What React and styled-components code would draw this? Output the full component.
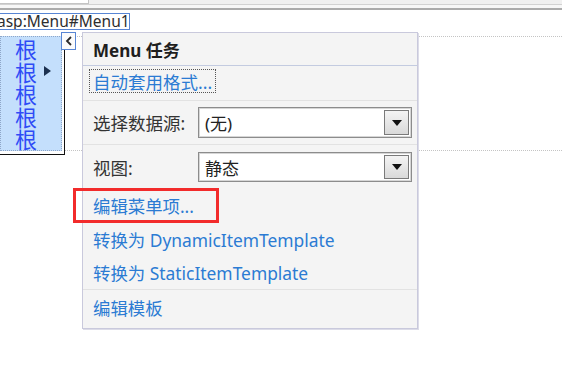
import React from 'react';
import styled, { createGlobalStyle } from 'styled-components';

const GlobalStyle = createGlobalStyle`
  html, body {
    margin: 0;
    background: #fff;
  }
  body {
    font-family: "Noto Sans", "Noto Sans CJK SC", sans-serif;
    width: 562px;
    height: 374px;
    overflow: hidden;
  }
`;

const TopBar = styled.div`
  height: 8px;
  background: #f7f7f7;
  border-bottom: 2px solid #ababab;
`;

const TopStrip = styled.div`
  height: 4px;
  background: #f0f0f0;
  border-bottom: 1px solid #d2d2d2;
  display: flex;
`;

const TopTab = styled.div`
  width: 88px;
  height: 3px;
  background: #fff;
  border-right: 1px solid #c4c4c4;
  border-bottom: 1px solid #c4c4c4;
`;

const Canvas = styled.div`
  position: relative;
  height: 364px;
`;

const Tag = styled.div`
  display: inline-flex;
  align-items: center;
  margin-left: -5px;
  width: 132px;
  height: 15px;
  padding-left: 1px;
  border: 1.5px solid #5785d4;
  font-size: 15.5px;
  color: #2e2e2e;
  line-height: 1;
  white-space: nowrap;
  overflow: hidden;
`;

const DesignBand = styled.div`
  display: flex;
`;

const ControlFrame = styled.div`
  padding-top: 4px;
  padding-right: 2px;
  padding-bottom: 3px;
  border-right: 1.5px solid #111;
  border-bottom: 1.5px solid #111;
`;

const MenuBox = styled.div`
  width: 47px;
  height: 114px;
  padding-left: 15px;
  padding-top: 1px;
  background: #c4dffc;
  outline: 1px dotted #8ea6c8;
  outline-offset: -1px;
  display: flex;
  flex-direction: column;
`;

const MenuItem = styled.div`
  display: flex;
  align-items: center;
  height: 22.6px;
  font-family: "Noto Sans CJK SC", sans-serif;
  font-size: 22px;
  line-height: 22.6px;
  color: #2f4cf6;
`;

const PopArrow = styled.span`
  margin-left: 7px;
  width: 0;
  height: 0;
  border-top: 5px solid transparent;
  border-bottom: 5px solid transparent;
  border-left: 7px solid #1c3150;
`;

const BandLines = styled.div`
  flex: 1;
  margin-top: 4px;
  height: 113px;
  border-top: 1.5px dotted #c4c4c4;
  border-bottom: 1.5px dotted #c4c4c4;
`;

const SmartTagButton = styled.div`
  position: absolute;
  left: 61px;
  top: 22px;
  width: 13px;
  height: 16px;
  background: #fbfbfb;
  border: 1.5px solid #5785d4;
  display: flex;
  align-items: center;
  justify-content: center;
`;

const Panel = styled.div`
  position: absolute;
  left: 82px;
  top: 22px;
  width: 334px;
  height: 295px;
  background: #f4f4f4;
  border: 1px solid #c9c9dc;
  box-shadow: 1px 1px 0 #dcdce8;
  display: flex;
  flex-direction: column;
`;

const PanelHeader = styled.div`
  height: 32px;
  padding-left: 10px;
  display: flex;
  align-items: center;
  border-bottom: 1.5px solid #c3cbe0;
  font-weight: bold;
  font-size: 17px;
  color: #1e1e1e;
`;

const Section = styled.div`
  padding: ${(p) => p.$pad || '0'};
  border-bottom: ${(p) => (p.$line ? '1px solid #e2e2e2' : 'none')};
  display: flex;
  flex-direction: column;
`;

const FocusLink = styled.div`
  align-self: flex-start;
  margin-left: 6px;
  height: 22px;
  padding: 0 3px;
  border: 1px dotted #555;
  display: flex;
  align-items: center;
  font-size: 17.5px;
  color: #2b7bd3;
`;

const FieldRow = styled.div`
  display: flex;
  align-items: center;
  padding-left: 10px;
`;

const Label = styled.div`
  width: 105px;
  font-size: 17.5px;
  color: #333;
`;

const Select = styled.div`
  width: 214px;
  height: ${(p) => p.$h}px;
  background: #fff;
  border: 1px solid #8c8c8c;
  box-shadow: inset 0 0 0 1px #d6d6d6;
  display: flex;
  align-items: center;
  justify-content: space-between;
  padding-left: 6px;
  box-sizing: border-box;
  font-size: 17px;
  color: #222;
`;

const DropButton = styled.div`
  width: 25px;
  height: ${(p) => p.$h}px;
  margin-right: 2px;
  box-sizing: border-box;
  border: 1.5px solid #7a7a7a;
  background: linear-gradient(#f4f4f4, #d9d9d9);
  display: flex;
  align-items: center;
  justify-content: center;
`;

const LinkItem = styled.div`
  height: ${(p) => p.$h || 33}px;
  padding-left: 10px;
  display: flex;
  align-items: center;
  font-size: 17.4px;
  color: #2b7bd3;
  white-space: nowrap;
`;

const Highlight = styled.div`
  position: absolute;
  left: 73px;
  top: 178px;
  width: 140px;
  height: 29px;
  border: 3px solid #f22b2b;
`;

const Chevron = () => (
  <svg width="8" height="10" viewBox="0 0 8 10">
    <polyline points="6,1 2,5 6,9" fill="none" stroke="#2a2a2a" strokeWidth="1.8" />
  </svg>
);

const DownTriangle = () => (
  <svg width="10" height="6" viewBox="0 0 10 6">
    <polygon points="0,0 10,0 5,6" fill="#111" />
  </svg>
);

const ComboBox = ({ value, h }) => (
  <Select $h={h}>
    <span>{value}</span>
    <DropButton $h={h - 6}>
      <DownTriangle />
    </DropButton>
  </Select>
);

const App = () => {
  const items = ['根', '根', '根', '根', '根'];

  return (
    <>
      <GlobalStyle />
      <TopBar>
        <TopStrip>
          <TopTab />
        </TopStrip>
      </TopBar>
      <Canvas>
        <Tag>asp:Menu#Menu1</Tag>
        <DesignBand>
          <ControlFrame>
            <MenuBox>
              {items.map((c, i) => (
                <MenuItem key={i}>
                  {c}
                  {i === 1 && <PopArrow />}
                </MenuItem>
              ))}
            </MenuBox>
          </ControlFrame>
          <BandLines />
        </DesignBand>

        <SmartTagButton>
          <Chevron />
        </SmartTagButton>

        <Panel>
          <PanelHeader>Menu 任务</PanelHeader>
          <Section $pad="3px 0 7px" $line>
            <FocusLink>自动套用格式...</FocusLink>
          </Section>
          <Section $pad="6px 0 6px" $line>
            <FieldRow>
              <Label>选择数据源:</Label>
              <ComboBox value="(无)" h={31} />
            </FieldRow>
          </Section>
          <Section $pad="7px 0 7px">
            <FieldRow>
              <Label>视图:</Label>
              <ComboBox value="静态" h={30} />
            </FieldRow>
          </Section>
          <Section $line>
            <LinkItem>编辑菜单项...</LinkItem>
            <LinkItem $h={34}>转换为 DynamicItemTemplate</LinkItem>
            <LinkItem>转换为 StaticItemTemplate</LinkItem>
          </Section>
          <Section>
            <LinkItem $h={35}>编辑模板</LinkItem>
          </Section>
        </Panel>

        <Highlight />
      </Canvas>
    </>
  );
};

export default App;
